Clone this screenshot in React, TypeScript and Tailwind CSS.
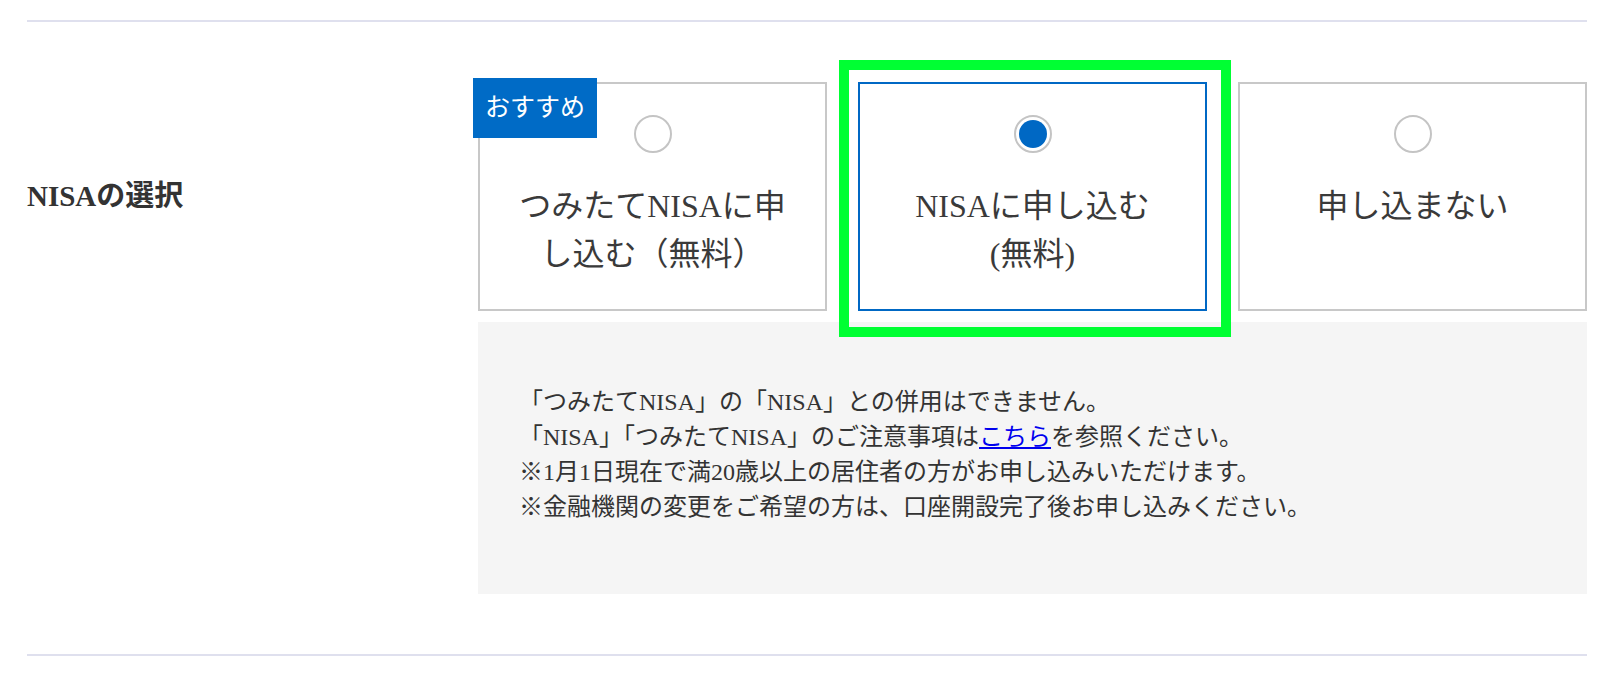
import { ReactNode } from "react";

interface OptionCardProps {
  selected?: boolean;
  badge?: string;
  highlight?: boolean;
  children: ReactNode;
}

function OptionCard({ selected = false, badge, highlight = false, children }: OptionCardProps) {
  return (
    <label
      className={
        "relative flex h-[229px] cursor-pointer flex-col items-center border-2 bg-white px-[28px] pt-[31px] " +
        (selected ? "border-[#0068c4]" : "border-[#c8c8c8]")
      }
    >
      {badge && (
        <span className="absolute -left-[7px] -top-[6px] flex h-[60px] w-[124px] items-center justify-center bg-[#006bc6] text-[25px] text-white">
          {badge}
        </span>
      )}
      <span className="flex h-[38px] w-[38px] items-center justify-center rounded-full border-2 border-[#c4c4c4] bg-white">
        {selected && <span className="h-[28px] w-[28px] rounded-full bg-[#0068c4]" />}
      </span>
      <span className="mt-[29px] text-center text-[32px] leading-[48px] text-[#3a3a3a]">{children}</span>
      {highlight && (
        <span className="pointer-events-none absolute -left-[21px] -top-[24px] h-[277px] w-[392px] border-[10px] border-[#00ff33]" />
      )}
    </label>
  );
}

export default function App() {
  return (
    <div className="min-h-screen bg-white pl-[27px] pr-[21px] pt-[20px] font-['Liberation_Serif','Noto_Sans_CJK_JP',serif] text-[#333]">
      <div className="flex border-y-2 border-[#dfe0ee] pb-[60px] pt-[60px]">
        <div className="w-[451px] shrink-0">
          <div className="flex h-[229px] items-center text-[29px] font-bold">NISAの選択</div>
        </div>

        <div className="w-[1109px]">
          <div className="grid grid-cols-3 gap-[31px]">
            <OptionCard badge="おすすめ">つみたてNISAに申し込む（無料）</OptionCard>
            <OptionCard selected highlight>
              NISAに申し込む
              <br />
              (無料)
            </OptionCard>
            <OptionCard>申し込まない</OptionCard>
          </div>

          <div className="mt-[11px] bg-[#f5f5f5] pb-[69px] pl-[41px] pt-[63px] text-[24px] leading-[35px] text-[#333]">
            <p>「つみたてNISA」の「NISA」との併用はできません。</p>
            <p>
              「NISA」「つみたてNISA」のご注意事項は
              <a href="#" className="text-[#0000ee] underline">
                こちら
              </a>
              を参照ください。
            </p>
            <p>※1月1日現在で満20歳以上の居住者の方がお申し込みいただけます。</p>
            <p>※金融機関の変更をご希望の方は、口座開設完了後お申し込みください。</p>
          </div>
        </div>
      </div>
    </div>
  );
}
